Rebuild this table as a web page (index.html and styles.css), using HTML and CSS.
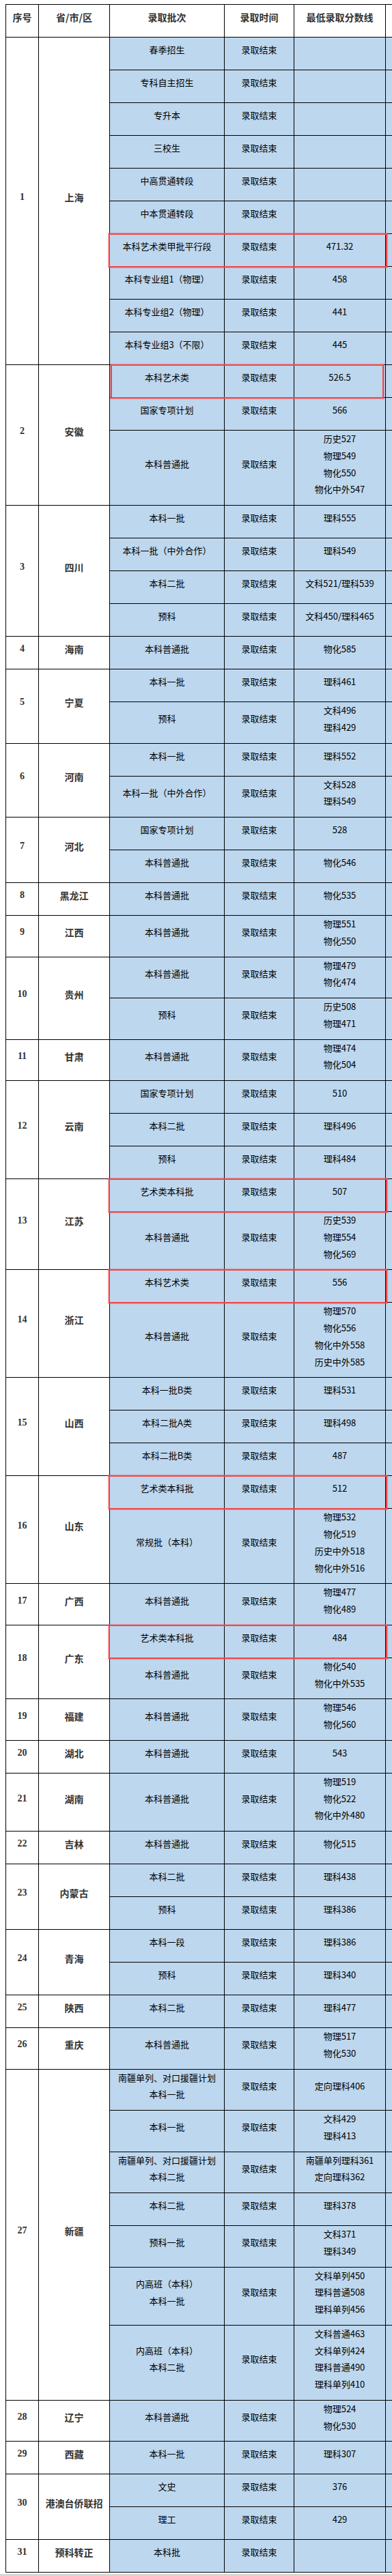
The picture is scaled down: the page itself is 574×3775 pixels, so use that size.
FILE: index.html
```html
<!DOCTYPE html>
<html lang="zh-CN">
<head>
<meta charset="utf-8">
<title>录取分数线</title>
<link rel="stylesheet" href="styles.css">
</head>
<body>
<div class="sheet">
<table class="scores">
<colgroup>
<col class="c-no"><col class="c-prov"><col class="c-batch"><col class="c-time"><col class="c-score"><col class="c-extra">
</colgroup>
<thead>
<tr><th>序号</th><th>省/市/区</th><th>录取批次</th><th>录取时间</th><th>最低录取分数线</th><th class="blank"></th></tr>
</thead>
<tbody>
<tr><td class="no" rowspan="10">1</td><td class="prov" rowspan="10">上海</td><td>春季招生</td><td>录取结束</td><td></td><td></td></tr>
<tr><td>专科自主招生</td><td>录取结束</td><td></td><td></td></tr>
<tr><td>专升本</td><td>录取结束</td><td></td><td></td></tr>
<tr><td>三校生</td><td>录取结束</td><td></td><td></td></tr>
<tr><td>中高贯通转段</td><td>录取结束</td><td></td><td></td></tr>
<tr><td>中本贯通转段</td><td>录取结束</td><td></td><td></td></tr>
<tr><td class="hl">本科艺术类甲批平行段</td><td>录取结束</td><td>471.32</td><td></td></tr>
<tr><td>本科专业组1（物理）</td><td>录取结束</td><td>458</td><td></td></tr>
<tr><td>本科专业组2（物理）</td><td>录取结束</td><td>441</td><td></td></tr>
<tr><td>本科专业组3（不限）</td><td>录取结束</td><td>445</td><td></td></tr>

<tr><td class="no" rowspan="3">2</td><td class="prov" rowspan="3">安徽</td><td class="hl hl-in">本科艺术类</td><td>录取结束</td><td>526.5</td><td></td></tr>
<tr><td>国家专项计划</td><td>录取结束</td><td>566</td><td></td></tr>
<tr><td>本科普通批</td><td>录取结束</td><td>历史527<br>物理549<br>物化550<br>物化中外547</td><td></td></tr>

<tr><td class="no" rowspan="4">3</td><td class="prov" rowspan="4">四川</td><td>本科一批</td><td>录取结束</td><td>理科555</td><td></td></tr>
<tr><td>本科一批（中外合作）</td><td>录取结束</td><td>理科549</td><td></td></tr>
<tr><td>本科二批</td><td>录取结束</td><td>文科521/理科539</td><td></td></tr>
<tr><td>预科</td><td>录取结束</td><td>文科450/理科465</td><td></td></tr>

<tr><td class="no">4</td><td class="prov">海南</td><td>本科普通批</td><td>录取结束</td><td>物化585</td><td></td></tr>

<tr><td class="no" rowspan="2">5</td><td class="prov" rowspan="2">宁夏</td><td>本科一批</td><td>录取结束</td><td>理科461</td><td></td></tr>
<tr><td>预科</td><td>录取结束</td><td>文科496<br>理科429</td><td></td></tr>

<tr><td class="no" rowspan="2">6</td><td class="prov" rowspan="2">河南</td><td>本科一批</td><td>录取结束</td><td>理科552</td><td></td></tr>
<tr><td>本科一批（中外合作）</td><td>录取结束</td><td>文科528<br>理科549</td><td></td></tr>

<tr><td class="no" rowspan="2">7</td><td class="prov" rowspan="2">河北</td><td>国家专项计划</td><td>录取结束</td><td>528</td><td></td></tr>
<tr><td>本科普通批</td><td>录取结束</td><td>物化546</td><td></td></tr>

<tr><td class="no">8</td><td class="prov">黑龙江</td><td>本科普通批</td><td>录取结束</td><td>物化535</td><td></td></tr>

<tr><td class="no">9</td><td class="prov">江西</td><td>本科普通批</td><td>录取结束</td><td>物理551<br>物化550</td><td></td></tr>

<tr><td class="no" rowspan="2">10</td><td class="prov" rowspan="2">贵州</td><td>本科普通批</td><td>录取结束</td><td>物理479<br>物化474</td><td></td></tr>
<tr><td>预科</td><td>录取结束</td><td>历史508<br>物理471</td><td></td></tr>

<tr><td class="no">11</td><td class="prov">甘肃</td><td>本科普通批</td><td>录取结束</td><td>物理474<br>物化504</td><td></td></tr>

<tr><td class="no" rowspan="3">12</td><td class="prov" rowspan="3">云南</td><td>国家专项计划</td><td>录取结束</td><td>510</td><td></td></tr>
<tr><td>本科二批</td><td>录取结束</td><td>理科496</td><td></td></tr>
<tr><td>预科</td><td>录取结束</td><td>理科484</td><td></td></tr>

<tr><td class="no" rowspan="2">13</td><td class="prov" rowspan="2">江苏</td><td class="hl">艺术类本科批</td><td>录取结束</td><td>507</td><td></td></tr>
<tr><td>本科普通批</td><td>录取结束</td><td>历史539<br>物理554<br>物化569</td><td></td></tr>

<tr><td class="no" rowspan="2">14</td><td class="prov" rowspan="2">浙江</td><td class="hl">本科艺术类</td><td>录取结束</td><td>556</td><td></td></tr>
<tr><td>本科普通批</td><td>录取结束</td><td>物理570<br>物化556<br>物化中外558<br>历史中外585</td><td></td></tr>

<tr><td class="no" rowspan="3">15</td><td class="prov" rowspan="3">山西</td><td>本科一批B类</td><td>录取结束</td><td>理科531</td><td></td></tr>
<tr><td>本科二批A类</td><td>录取结束</td><td>理科498</td><td></td></tr>
<tr><td>本科二批B类</td><td>录取结束</td><td>487</td><td></td></tr>

<tr><td class="no" rowspan="2">16</td><td class="prov" rowspan="2">山东</td><td class="hl">艺术类本科批</td><td>录取结束</td><td>512</td><td></td></tr>
<tr><td>常规批（本科）</td><td>录取结束</td><td>物理532<br>物化519<br>历史中外518<br>物化中外516</td><td></td></tr>

<tr><td class="no">17</td><td class="prov">广西</td><td>本科普通批</td><td>录取结束</td><td>物理477<br>物化489</td><td></td></tr>

<tr><td class="no" rowspan="2">18</td><td class="prov" rowspan="2">广东</td><td class="hl">艺术类本科批</td><td>录取结束</td><td>484</td><td></td></tr>
<tr><td>本科普通批</td><td>录取结束</td><td>物化540<br>物化中外535</td><td></td></tr>

<tr><td class="no">19</td><td class="prov">福建</td><td>本科普通批</td><td>录取结束</td><td>物理546<br>物化560</td><td></td></tr>

<tr><td class="no">20</td><td class="prov">湖北</td><td>本科普通批</td><td>录取结束</td><td>543</td><td></td></tr>

<tr><td class="no">21</td><td class="prov">湖南</td><td>本科普通批</td><td>录取结束</td><td>物理519<br>物化522<br>物化中外480</td><td></td></tr>

<tr><td class="no">22</td><td class="prov">吉林</td><td>本科普通批</td><td>录取结束</td><td>物化515</td><td></td></tr>

<tr><td class="no" rowspan="2">23</td><td class="prov" rowspan="2">内蒙古</td><td>本科二批</td><td>录取结束</td><td>理科438</td><td></td></tr>
<tr><td>预科</td><td>录取结束</td><td>理科386</td><td></td></tr>

<tr><td class="no" rowspan="2">24</td><td class="prov" rowspan="2">青海</td><td>本科一段</td><td>录取结束</td><td>理科386</td><td></td></tr>
<tr><td>预科</td><td>录取结束</td><td>理科340</td><td></td></tr>

<tr><td class="no">25</td><td class="prov">陕西</td><td>本科二批</td><td>录取结束</td><td>理科477</td><td></td></tr>

<tr><td class="no">26</td><td class="prov">重庆</td><td>本科普通批</td><td>录取结束</td><td>物理517<br>物化530</td><td></td></tr>

<tr><td class="no" rowspan="7">27</td><td class="prov" rowspan="7">新疆</td><td>南疆单列、对口援疆计划<br>本科一批</td><td>录取结束</td><td>定向理科406</td><td></td></tr>
<tr><td>本科一批</td><td>录取结束</td><td>文科429<br>理科413</td><td></td></tr>
<tr><td>南疆单列、对口援疆计划<br>本科二批</td><td>录取结束</td><td>南疆单列理科361<br>定向理科362</td><td></td></tr>
<tr><td>本科二批</td><td>录取结束</td><td>理科378</td><td></td></tr>
<tr><td>预科一批</td><td>录取结束</td><td>文科371<br>理科349</td><td></td></tr>
<tr><td>内高班（本科）<br>本科一批</td><td>录取结束</td><td>文科单列450<br>理科普通508<br>理科单列456</td><td></td></tr>
<tr><td>内高班（本科）<br>本科二批</td><td>录取结束</td><td>文科普通463<br>文科单列424<br>理科普通490<br>理科单列410</td><td></td></tr>

<tr><td class="no">28</td><td class="prov">辽宁</td><td>本科普通批</td><td>录取结束</td><td>物理524<br>物化530</td><td></td></tr>

<tr><td class="no">29</td><td class="prov">西藏</td><td>本科一批</td><td>录取结束</td><td>理科307</td><td></td></tr>

<tr><td class="no" rowspan="2">30</td><td class="prov" rowspan="2">港澳台侨联招</td><td>文史</td><td>录取结束</td><td>376</td><td></td></tr>
<tr><td>理工</td><td>录取结束</td><td>429</td><td></td></tr>

<tr><td class="no">31</td><td class="prov">预科转正</td><td>本科批</td><td>录取结束</td><td></td><td></td></tr>
</tbody>
</table>
<div class="scrollbar"></div>
</div>
</body>
</html>
```

FILE: styles.css
```css
html, body {
  margin: 0;
  padding: 0;
  background: #ffffff;
}

.sheet {
  width: 574px;
  overflow: hidden;
  padding: 6px 0 0 8px;
  box-sizing: border-box;
}

.scores {
  border-collapse: collapse;
  table-layout: fixed;
  width: 616px;
  font-family: "Noto Sans CJK SC", "Liberation Sans", sans-serif;
  font-size: 13px;
  color: #000;
}

.c-no { width: 48px; }
.c-prov { width: 104px; }
.c-batch { width: 168px; }
.c-time { width: 102px; }
.c-score { width: 134px; }
.c-extra { width: 60px; }

.scores tr {
  height: 48px;
}

.scores th,
.scores td {
  border: 1px solid #000;
  padding: 0 2px 10px;
  line-height: 24.75px;
  text-align: center;
  vertical-align: middle;
  white-space: nowrap;
  background: #bdd7ee;
}

.scores th {
  background: #fff;
  font-size: 14px;
  font-weight: bold;
  color: #333;
}

.scores th.blank {
  border-right: none;
}

.scores td:last-child {
  border-right: none;
}

.scores td.no {
  background: #fff;
  font-family: "Liberation Serif", serif;
  font-weight: bold;
  font-size: 14px;
  color: #333;
}

.scores td.prov {
  background: #fff;
  font-weight: bold;
  font-size: 14px;
  color: #333;
}

.scores td.hl {
  position: relative;
}

.scores td.hl::after {
  content: "";
  position: absolute;
  left: -2px;
  top: -1px;
  bottom: -2px;
  width: 408px;
  box-sizing: border-box;
  border: 2px solid #f04848;
  box-shadow: 0 0 1px 1px rgba(240, 72, 72, 0.35);
  pointer-events: none;
}

.scores td.hl-in::after {
  left: 1px;
  width: 400px;
}

.scrollbar {
  height: 3px;
  margin: 2px 0 0 -8px;
  background: #d9d6d3;
}
```
